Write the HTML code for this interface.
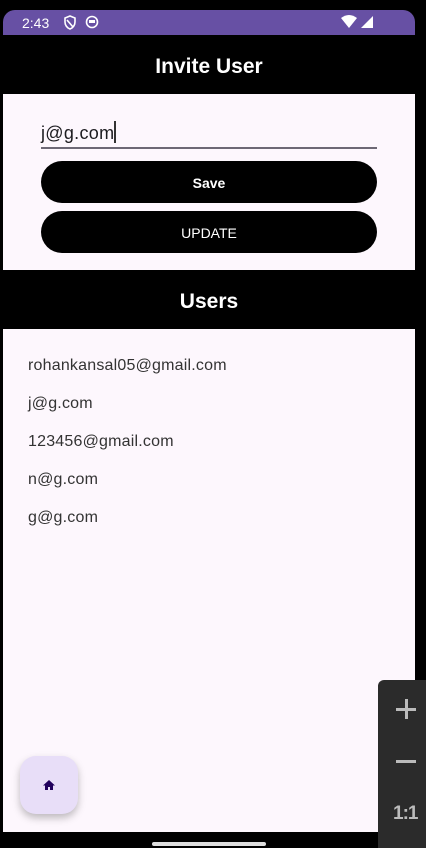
<!DOCTYPE html>
<html><head><style>
body{margin:0;width:426px;height:848px;background:#000;position:relative;overflow:hidden;font-family:"Liberation Sans",sans-serif}
.a{position:absolute}
.sb{left:3px;top:10px;width:412px;height:25px;background:#6750a4;border-radius:12px 12px 0 0;color:#fff;font-size:14px}
.h{left:3px;width:412px;color:#fff;font-weight:bold;font-size:20px;text-align:center}
.w{left:3px;width:412px;background:#fdf7fd}
.btn{left:41px;width:336px;height:42px;background:#000;border-radius:21px;color:#fff;font-size:14px;text-align:center;line-height:44px;font-weight:bold}
.it{left:28px;color:#333;font-size:16px;letter-spacing:0.2px}
</style></head><body>
<div class="a sb"><span class="a" style="left:19px;top:5px">2:43</span>
<svg class="a" style="left:60px;top:5px" width="14" height="15" viewBox="0 0 14 15"><path d="M7 1L2 3v4c0 3 2 6 5 7 3-1 5-4 5-7V3z M4 5l6 7" fill="none" stroke="#fff" stroke-width="1.6"/></svg>
<svg class="a" style="left:82px;top:5px" width="14" height="14"><circle cx="7" cy="7" r="5.5" fill="none" stroke="#fff" stroke-width="1.6"/><rect x="4" y="5" width="6" height="3" fill="#fff"/></svg>
<svg class="a" style="left:338px;top:5px" width="34" height="14"><path d="M0 3Q8-3 16 3L8 13z" fill="#fff"/><path d="M32 1V13H20z" fill="#fff"/></svg>
</div>
<div class="a h" style="top:55px;font-size:21px">Invite User</div>
<div class="a w" style="top:94px;height:176px"></div>
<div class="a" style="left:41px;top:121px;font-size:18px;color:#1c1b1f;letter-spacing:0.3px">j@g.com<span style="display:inline-block;width:2px;height:22px;background:#333;vertical-align:-4px"></span></div>
<div class="a" style="left:41px;top:147px;width:336px;height:2px;background:#6d6875"></div>
<div class="a btn" style="top:161px">Save</div>
<div class="a btn" style="top:211px;font-weight:normal">UPDATE</div>
<div class="a h" style="top:290px;font-size:21px">Users</div>
<div class="a w" style="top:329px;height:503px"></div>
<div class="a it" style="top:357px">rohankansal05@gmail.com</div>
<div class="a it" style="top:395px">j@g.com</div>
<div class="a it" style="top:433px">123456@gmail.com</div>
<div class="a it" style="top:471px">n@g.com</div>
<div class="a it" style="top:509px">g@g.com</div>
<div class="a" style="left:20px;top:756px;width:58px;height:58px;background:#e8def8;border-radius:16px;box-shadow:0 4px 8px rgba(0,0,0,.25)">
<svg class="a" style="left:22px;top:22px" width="14" height="14" viewBox="0 0 14 14"><path d="M7 2L1 7.5h2V12h3V9h2v3h3V7.5h2z" fill="#21005d"/></svg></div>
<div class="a" style="left:152px;top:842px;width:114px;height:4px;background:#ddd;border-radius:2px"></div>
<div class="a" style="left:378px;top:680px;width:48px;height:168px;background:#2b2b2b;border-radius:6px 0 0 0;color:#bbb">
<div class="a" style="left:18px;top:28px;width:20px;height:3px;background:#bbb"></div>
<div class="a" style="left:26.5px;top:19px;width:3px;height:20px;background:#bbb"></div>
<div class="a" style="left:18px;top:80px;width:20px;height:3px;background:#bbb"></div>
<div class="a" style="left:15px;top:123px;font-size:19px;font-weight:bold;letter-spacing:-1px">1:1</div>
</div>
</body></html>
